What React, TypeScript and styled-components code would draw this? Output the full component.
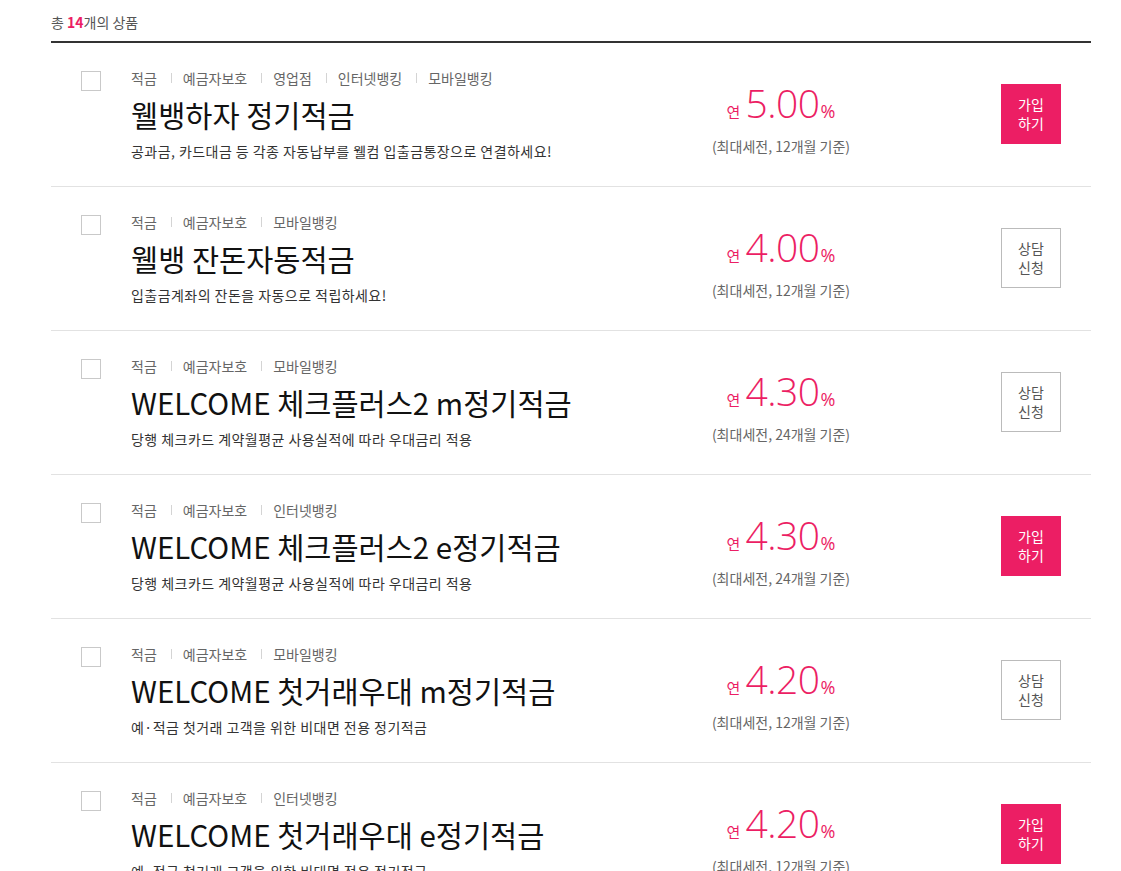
import styled, { createGlobalStyle } from "styled-components";

const GlobalStyle = createGlobalStyle`
  html, body {
    margin: 0;
    padding: 0;
    background: #fff;
  }
  body {
    font-family: "Noto Sans CJK KR", "Noto Sans", sans-serif;
    color: #111;
  }
`;

const PINK = "#ec1e64";

type Product = {
  tags: string[];
  title: string;
  desc: string;
  rate: string;
  months: number;
  action: "join" | "consult";
};

const products: Product[] = [
  {
    tags: ["적금", "예금자보호", "영업점", "인터넷뱅킹", "모바일뱅킹"],
    title: "웰뱅하자 정기적금",
    desc: "공과금, 카드대금 등 각종 자동납부를 웰컴 입출금통장으로 연결하세요!",
    rate: "5.00",
    months: 12,
    action: "join",
  },
  {
    tags: ["적금", "예금자보호", "모바일뱅킹"],
    title: "웰뱅 잔돈자동적금",
    desc: "입출금계좌의 잔돈을 자동으로 적립하세요!",
    rate: "4.00",
    months: 12,
    action: "consult",
  },
  {
    tags: ["적금", "예금자보호", "모바일뱅킹"],
    title: "WELCOME 체크플러스2 m정기적금",
    desc: "당행 체크카드 계약월평균 사용실적에 따라 우대금리 적용",
    rate: "4.30",
    months: 24,
    action: "consult",
  },
  {
    tags: ["적금", "예금자보호", "인터넷뱅킹"],
    title: "WELCOME 체크플러스2 e정기적금",
    desc: "당행 체크카드 계약월평균 사용실적에 따라 우대금리 적용",
    rate: "4.30",
    months: 24,
    action: "join",
  },
  {
    tags: ["적금", "예금자보호", "모바일뱅킹"],
    title: "WELCOME 첫거래우대 m정기적금",
    desc: "예·적금 첫거래 고객을 위한 비대면 전용 정기적금",
    rate: "4.20",
    months: 12,
    action: "consult",
  },
  {
    tags: ["적금", "예금자보호", "인터넷뱅킹"],
    title: "WELCOME 첫거래우대 e정기적금",
    desc: "예·적금 첫거래 고객을 위한 비대면 전용 정기적금",
    rate: "4.20",
    months: 12,
    action: "join",
  },
];

const Page = styled.div`
  padding: 0 30px 0 51px;
`;

const CountBar = styled.div`
  height: 43px;
  box-sizing: border-box;
  padding-top: 12px;
  font-size: 14px;
  line-height: 20px;
  color: #555;
  border-bottom: 2px solid #333;
`;

const CountNum = styled.strong`
  color: ${PINK};
  font-weight: 700;
`;

const List = styled.ul`
  list-style: none;
  margin: 0;
  padding: 0;
`;

const Row = styled.li`
  display: flex;
  align-items: flex-start;
  height: 144px;
  box-sizing: border-box;
  padding: 25px 30px 0 30px;
  border-bottom: 1px solid #e2e2e2;
`;

const Check = styled.span`
  flex-shrink: 0;
  display: block;
  width: 20px;
  height: 20px;
  box-sizing: border-box;
  border: 1px solid #c9c9c9;
  margin: 3px 30px 0 0;
`;

const Info = styled.div`
  flex: 1;
  min-width: 0;
  display: flex;
  flex-direction: column;
`;

const Tags = styled.div`
  display: flex;
  align-items: center;
  height: 20px;
  font-size: 14px;
  line-height: 20px;
  color: #666;
`;

const Tag = styled.span`
  display: flex;
  align-items: center;
  & + &::before {
    content: "";
    display: block;
    width: 1px;
    height: 10px;
    background: #d4d4d4;
    margin: 0 11px 0 14px;
  }
`;

const Title = styled.h3`
  margin: 6px 0 0;
  height: 40px;
  font-size: 29.5px;
  font-weight: 400;
  line-height: 40px;
  color: #111;
  white-space: nowrap;
`;

const Desc = styled.p`
  margin: 7px 0 0;
  font-size: 14px;
  line-height: 20px;
  letter-spacing: 0.45px;
  color: #333;
  white-space: nowrap;
`;

const RateBox = styled.div`
  flex-shrink: 0;
  width: 200px;
  display: flex;
  flex-direction: column;
  align-items: center;
  margin-top: 11px;
`;

const RateLine = styled.div`
  display: flex;
  align-items: baseline;
  height: 48px;
  color: ${PINK};
  line-height: 48px;
`;

const RateUnit = styled.span`
  font-size: 15px;
  margin-right: 5px;
`;

const RateNum = styled.span`
  font-family: "Open Sans", "Noto Sans", sans-serif;
  font-weight: 300;
  font-size: 39px;
  letter-spacing: -0.5px;
`;

const RatePct = styled.span`
  font-family: "Open Sans", "Noto Sans", sans-serif;
  font-size: 18px;
  margin-left: 1px;
`;

const RateNote = styled.div`
  margin-top: 9px;
  font-size: 14px;
  line-height: 20px;
  color: #666;
  white-space: nowrap;
`;

const ActionButton = styled.button<{ $primary: boolean }>`
  flex-shrink: 0;
  margin: 16px 0 0 120px;
  width: 60px;
  height: 60px;
  padding: 0;
  box-sizing: border-box;
  font-family: inherit;
  font-size: 14px;
  line-height: 19px;
  cursor: pointer;
  background: ${(p) => (p.$primary ? PINK : "#fff")};
  color: ${(p) => (p.$primary ? "#fff" : "#555")};
  border: 1px solid ${(p) => (p.$primary ? PINK : "#bbb")};
`;

export default function App() {
  return (
    <Page>
      <GlobalStyle />
      <CountBar>
        총 <CountNum>14</CountNum>개의 상품
      </CountBar>
      <List>
        {products.map((p, i) => (
          <Row key={i}>
            <Check />
            <Info>
              <Tags>
                {p.tags.map((t) => (
                  <Tag key={t}>{t}</Tag>
                ))}
              </Tags>
              <Title>{p.title}</Title>
              <Desc>{p.desc}</Desc>
            </Info>
            <RateBox>
              <RateLine>
                <RateUnit>연</RateUnit>
                <RateNum>{p.rate}</RateNum>
                <RatePct>%</RatePct>
              </RateLine>
              <RateNote>(최대세전, {p.months}개월 기준)</RateNote>
            </RateBox>
            <ActionButton $primary={p.action === "join"}>
              {p.action === "join" ? "가입" : "상담"}
              <br />
              {p.action === "join" ? "하기" : "신청"}
            </ActionButton>
          </Row>
        ))}
      </List>
    </Page>
  );
}
